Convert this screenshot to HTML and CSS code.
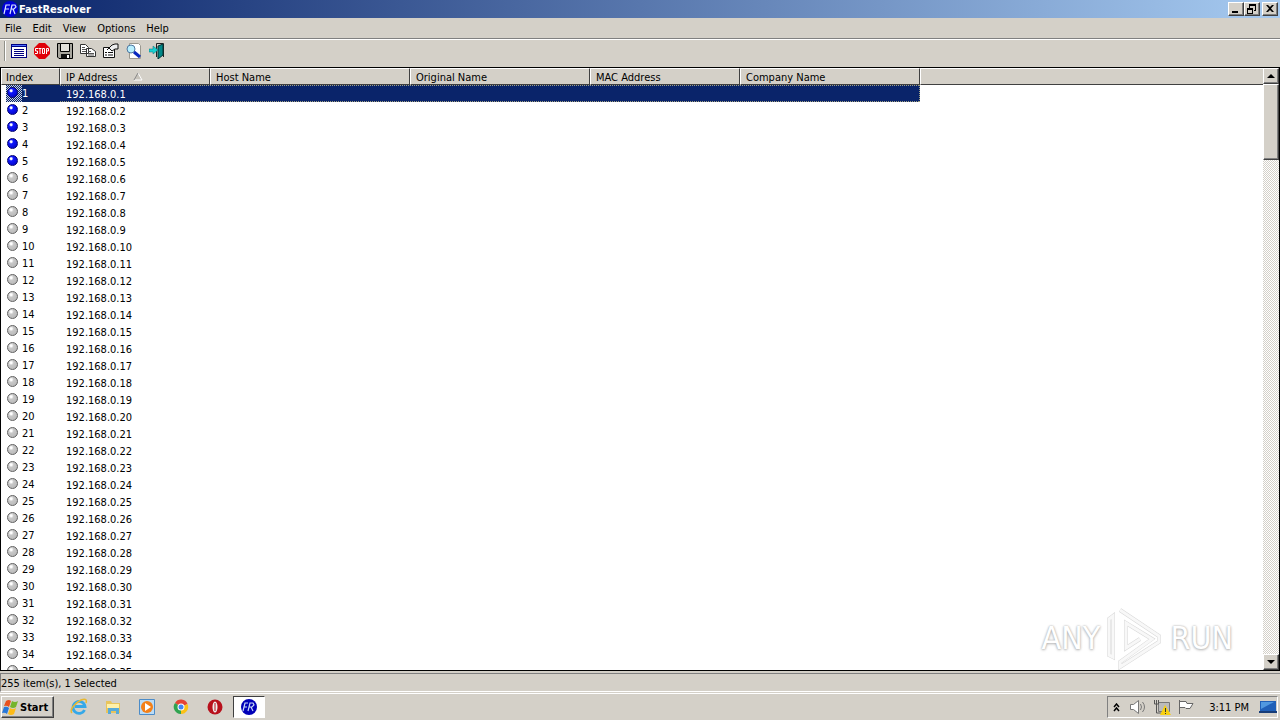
FILE: index.html
```html
<!DOCTYPE html>
<html lang="en">
<head>
<meta charset="utf-8">
<title>FastResolver</title>
<link rel="stylesheet" href="styles.css">
</head>
<body>
<main class="window">
  <header class="titlebar">
    <svg class="icon16" viewBox="0 0 16 16"><circle cx="8" cy="8" r="8" fill="#0000d8"/><path d="M2 13L4 4H8M3 8H7M8 13L10 4H13L14 6L12 8H9M11 8L13 13" fill="none" stroke="#dce6ff" stroke-width="1.2"/></svg>
    <h1 class="title">FastResolver</h1>
    <div class="window-buttons">
      <button class="raised caption" aria-label="Minimize"><svg viewBox="0 0 12 10"><path d="M2 7h6v2H2z"/></svg></button>
      <button class="raised caption" aria-label="Restore"><svg viewBox="0 0 12 10"><path d="M3 0h7v7H8V6h1V2H4v2H3zM1 4h6v6H1zM2 6v3h4V6z" fill-rule="evenodd"/></svg></button>
      <button class="raised caption close" aria-label="Close"><svg viewBox="0 0 12 10"><path d="M2 1h2l2 2 2-2h2L7 4.500 10 8H8L6 6 4 8H2l3-3.500z"/></svg></button>
    </div>
  </header>
  <nav class="menubar">
    <button>File</button><button>Edit</button><button>View</button><button>Options</button><button>Help</button>
  </nav>
  <div class="toolbar">
    <span class="grip"></span>
    <button aria-label="Resolve"><svg class="icon16" viewBox="0 0 16 16"><path d="M0 1h16v14H0z" fill="#000080"/><path d="M1 4h14v10H1z" fill="#fff"/><path d="M1 2h14v1H1z" fill="#5070ff"/><path d="M3 6.500h10M3 8.500h10M3 10.500h10M3 12.500h10" stroke="#000080"/></svg></button>
    <button aria-label="Stop"><svg class="icon16" viewBox="0 0 16 16"><path d="M5 0h6l5 5v6l-5 5H5l-5-5V5z" fill="#e00008"/><path d="M4 5.500H1.500v2.500H3.500v2.500H1M4.500 5.500h3M6 5.500V11M8.500 5.500h2v5h-2zM12.500 11V5.500h2V8h-2" fill="none" stroke="#fff"/></svg></button>
    <button aria-label="Save"><svg class="icon16" viewBox="0 0 16 16"><path d="M.5.500h15v15H2L.5 14z" fill="#a8a69e" stroke="#000"/><path d="M3.500.500h9v8h-9z" fill="#e4e2dc" stroke="#000"/><path d="M4 11h9v4H4z" fill="#111"/><path d="M10 12h2v3h-2z" fill="#fff"/></svg></button>
    <button aria-label="Copy"><svg class="icon16" viewBox="0 0 16 16"><path d="M.5 1.500h5l3 3v6h-8zM6.500 5.500h5l4 3v5h-9z" fill="#fff" stroke="#333"/><path d="M2 4.500h3M2 6.500h4M2 8.500h4M8 8.500h3M8 10.500h6M8 12h6" fill="none" stroke="#555"/></svg></button>
    <button aria-label="Properties"><svg class="icon16" viewBox="0 0 16 16"><path d="M.5 4.500h11v10H.5z" fill="#fff" stroke="#111"/><path d="M2 9.500h2M5 9.500h5M2 12h2M5 12h5" stroke="#111"/><path d="M4 7l5-5 3-1h3v5h-3L9 8 6 5" fill="#eee" stroke="#111"/></svg></button>
    <button aria-label="Find"><svg class="icon16" viewBox="0 0 16 16"><path d="M3.500.500h9l2 2v13h-11z" fill="#fff" stroke="#9a9890"/><circle cx="5" cy="6" r="4" fill="#b8efff" stroke="#5078a0"/><path d="M8 9l6 5" stroke="#0828c0" stroke-width="3"/></svg></button>
    <button aria-label="Exit"><svg class="icon16" viewBox="0 0 16 16"><path d="M7.500 14V.500h7V14" fill="#d4d0c8" stroke="#222"/><path d="M9 3l5-2v11l-5 4z" fill="#008888" stroke="#033"/><path d="M0 6h4V3l5 4-5 4V9H0z" fill="#18d0d0" stroke="#087078" stroke-width=".5"/></svg></button>
  </div>
  <section class="list">
    <div class="list-view">
      <table>
        <colgroup><col class="w59"><col class="w150"><col class="w200"><col class="w180"><col class="w150"><col class="w180"><col></colgroup>
        <thead><tr><th>Index</th><th>IP Address <svg class="sort" viewBox="0 0 10 8"><path d="M1 7L5 0l4 7z" fill="#c8c4bc"/><path d="M5 0l4 7H1" fill="none" stroke="#fff"/><path d="M1 7L5 0" stroke="#888"/></svg></th><th>Host Name</th><th>Original Name</th><th>MAC Address</th><th>Company Name</th><th></th></tr></thead>
        <tbody id="rows"></tbody>
      </table>
    </div>
    <div class="scrollbar">
      <button class="raised arrow" aria-label="Scroll up"><svg viewBox="0 0 8 4"><path d="M0 4l4-4 4 4z"/></svg></button>
      <div class="raised thumb"></div>
      <div class="track"></div>
      <button class="raised arrow" aria-label="Scroll down"><svg viewBox="0 0 8 4"><path d="M0 0h8L4 4z"/></svg></button>
    </div>
    <div class="watermark">
      <span>ANY</span>
      <svg viewBox="0 0 58 64"><path d="M7 51V10l-4 3v36zM14 4l39 26v6L14 61v-5l32-23L20 17v25l14-9" fill="none" stroke="#d8d8d8" stroke-width="4"/><path d="M7 51V10l-4 3v36zM14 4l39 26v6L14 61v-5l32-23L20 17v25l14-9" fill="none" stroke="#f8f8f8" stroke-width="3"/></svg>
      <span>RUN</span>
    </div>
  </section>
  <footer class="status"><span>255 item(s), 1 Selected</span></footer>
</main>
<nav class="taskbar">
  <button class="raised start"><svg class="icon18" viewBox="0 0 18 18"><path d="M4 3q3-2 5 0L7 9Q5 7 2 8z" fill="#e8501c"/><path d="M10 3q3 2 6 0l-2 6q-3 2-6 0z" fill="#75b52c"/><path d="M2 9q3-1 5 1l-2 6q-2-2-5-1z" fill="#2878d8"/><path d="M8 10q3 2 6 0l-2 6q-3 2-6 0z" fill="#fdbb18"/></svg>Start</button>
  <div class="quick">
    <button aria-label="Internet Explorer"><svg class="icon18" viewBox="0 0 18 18"><path d="M14.500 12A6 6 0 1 1 15 8.500H5" fill="none" stroke="#35a8e8" stroke-width="2.800"/><path d="M2 15C-1 12 5 5 11 2c5-2 6 0 5 3" fill="none" stroke="#e8b830" stroke-width="1.500"/></svg></button>
    <button aria-label="Explorer"><svg class="icon18" viewBox="0 0 18 18"><path d="M2 3h5l1 2h8v10H2z" fill="#e8c45c"/><path d="M3 6h12v4H3z" fill="#fff0a8"/><path d="M4 16v-6h11v6h-3v-3H7v3z" fill="#58aad8"/></svg></button>
    <button aria-label="Media Player"><svg class="icon18" viewBox="0 0 18 18"><path d="M1.500 1.500h15v15h-15z" fill="#bbdcf6" stroke="#4c8cc8"/><circle cx="9" cy="9" r="6" fill="#f48018"/><path d="M7 5l6 4-6 4z" fill="#fff"/></svg></button>
    <button aria-label="Chrome"><svg class="icon18" viewBox="0 0 18 18"><path d="M9 9L3 5a7 7 0 0 1 12.500 1z" fill="#e54335"/><path d="M9 9l6.500-3A7 7 0 0 1 9 16z" fill="#fbc116"/><path d="M9 9v7A7 7 0 0 1 3 5z" fill="#30a350"/><circle cx="9" cy="9" r="3.500" fill="#fff"/><circle cx="9" cy="9" r="2.500" fill="#4285f4"/></svg></button>
    <button aria-label="Opera"><svg class="icon18" viewBox="0 0 18 18"><circle cx="9" cy="9" r="7.500" fill="#b8101c"/><ellipse cx="9" cy="9" rx="2.500" ry="5.500" fill="#eee"/><path d="M9 5v8" stroke="#b8101c"/></svg></button>
  </div>
  <button class="task" aria-label="FastResolver"><svg class="icon18" viewBox="0 0 18 18"><circle cx="9" cy="9" r="8" fill="#0000b8"/><path d="M3 13L5 5H8M4 9H7M8 13L10 5H13L14 7L12 9H9M11 9L13 13" fill="none" stroke="#c8d8f8" stroke-width="1.200"/></svg></button>
  <div class="tray">
    <svg class="chevrons" viewBox="0 0 7 9"><path d="M1 4l2.500-3L6 4M1 8l2.500-3L6 8" fill="none" stroke="#000" stroke-width="1.500"/></svg>
    <svg class="icon18" viewBox="0 0 18 18"><path d="M1.500 6.500h3l5-4v13l-5-4h-3z" fill="#fff" stroke="#777"/><path d="M11.500 6q2 3 0 6M13.500 4q4 5 0 10" fill="none" stroke="#777"/></svg>
    <svg class="icon18 network" viewBox="0 0 18 18"><path d="M5.500 4.500h11v9h-11z" fill="#bbb" stroke="#777"/><path d="M1.500 2v4h4V2M3.500 2v4M3.500 6v9h5" fill="none" stroke="#555"/><path d="M12 7l6 10H7z" fill="#f8d010"/><path d="M12.500 10v4M12.500 15v1" stroke="#333"/></svg>
    <svg class="icon18 flag" viewBox="0 0 18 18"><path d="M2.500 2v14M3 3.500h6l1 2h6l-3 5H9l-1-1H3" fill="#fff" stroke="#666"/></svg>
    <time>3:11 PM</time>
    <svg class="icon18" viewBox="0 0 18 18"><path d="M1 3h16v10H1z" fill="#2060b8"/><path d="M2 4h13L2 11z" fill="#5098e0"/><path d="M0 13h18v2H0z" fill="#163c78"/></svg>
  </div>
</nav>
<script src="rows.js"></script>
</body>
</html>
```

FILE: styles.css
```css
* { box-sizing: border-box; }
body {
  margin: 0;
  height: 100vh;
  display: flex;
  flex-direction: column;
  overflow: hidden;
  background: #d4d0c8;
  color: #000;
  font: 11px/13px "DejaVu Sans Condensed", "DejaVu Sans", sans-serif;
}
button { border: 0; padding: 0; margin: 0; background: none; color: inherit; font: inherit; }
svg { display: block; flex: none; }
.icon16 { width: 16px; height: 16px; }
.icon18 { width: 18px; height: 18px; }
.raised {
  background: #d4d0c8;
  border: 1px solid;
  border-color: #fff #404040 #404040 #fff;
  box-shadow: inset -1px -1px #808080;
}
.window { flex: 1; min-height: 0; display: flex; flex-direction: column; }
.titlebar {
  height: 18px;
  flex: none;
  display: flex;
  align-items: center;
  padding: 0 2px;
  gap: 1px;
  background: linear-gradient(90deg, #0a246a, #a6caf0);
  color: #fff;
}
.title { margin: 0; flex: 1; font-size: 11px; font-weight: bold; }
.window-buttons { display: flex; }
.caption { width: 16px; height: 14px; display: flex; align-items: center; justify-content: center; }
.caption svg { width: 12px; height: 10px; }
.close { margin-left: 2px; }
.menubar {
  height: 21px;
  flex: none;
  display: flex;
  align-items: center;
  gap: 11px;
  padding: 0 5px;
  border-bottom: 1px solid #808080;
}
.toolbar {
  height: 28px;
  flex: none;
  display: flex;
  align-items: center;
  gap: 7px;
  padding: 0 4px 5px;
  border-top: 1px solid #fff;
}
.grip { width: 1px; height: 20px; background: #909088; box-shadow: 1px 0 #fff; margin-right: -1px; }
.list {
  flex: 1;
  min-height: 0;
  display: flex;
  position: relative;
  border: 1px solid #000;
  background: #fff;
}
.list-view { flex: 1; min-width: 0; overflow: hidden; }
table { width: 100%; table-layout: fixed; border-collapse: separate; border-spacing: 0; }
.w59 { width: 59px; }
.w150 { width: 150px; }
.w180 { width: 180px; }
.w200 { width: 200px; }
th {
  height: 17px;
  padding: 1px 5px 0;
  text-align: left;
  font-weight: normal;
  white-space: nowrap;
  background: #d4d0c8;
  border: 1px solid;
  border-color: #fff #404040 #404040 #fff;
  line-height: 13px;
}
th:first-child { padding-left: 4px; }
th:last-child { border-right: 0; }
.sort { display: inline-block; width: 10px; height: 8px; margin-left: 12px; }
td { height: 17px; padding: 1px 6px; line-height: 15px; white-space: nowrap; vertical-align: top; }
td:not(:first-child) { padding-top: 2px; padding-bottom: 0; }
.item { display: flex; align-items: center; gap: 4px; }
.ball {
  width: 11px;
  height: 11px;
  margin-bottom: 2px;
  border: 1px solid #606060;
  border-radius: 50%;
  background: radial-gradient(circle at 35% 30%, #fff 10%, #c8c8c8 30%, #b4b4b4);
}
.ball.blue { border-color: #000070; background: radial-gradient(circle at 35% 30%, #fff 10%, #1018ff 25%, #0000b8); }
.selected td { color: #fff; background: #0a246a; }
.selected td:not(:last-child) { background-image: repeating-linear-gradient(90deg, #a0a080 0 1px, transparent 1px 2px), repeating-linear-gradient(90deg, #a0a080 0 1px, transparent 1px 2px); background-size: 100% 1px; background-position: top, bottom; background-repeat: no-repeat; }
.selected td:first-child { background: linear-gradient(90deg, #fff 5px, transparent 5px 21px, #0a246a 21px), repeating-conic-gradient(#0a246a 0 25%, #c8d0e0 0 50%) 0 0 / 2px 2px; background-size: auto, 2px 2px; background-repeat: repeat; background-position: 0 0; }
.selected td:nth-child(6) { border-right: 1px dotted #a0a080; }
.selected td:last-child { background: none; }
.scrollbar { width: 16px; display: flex; flex-direction: column; flex: none; }
.arrow { height: 16px; flex: none; display: flex; align-items: center; justify-content: center; }
.arrow svg { width: 8px; height: 4px; }
.thumb { height: 76px; flex: none; }
.track { flex: 1; background: repeating-conic-gradient(#d4d0c8 0 25%, #fff 0 50%) 0 0 / 2px 2px; }
.watermark {
  position: absolute;
  right: 46px;
  bottom: 0;
  display: flex;
  align-items: center;
  gap: 6px;
  color: #fff;
  font: 32px/60px "DejaVu Sans Condensed", "DejaVu Sans", sans-serif;
  text-shadow: 0 0 2px #aaa, 0 1px 3px #bbb;
}
.watermark svg { width: 58px; height: 64px; }
.status { height: 22px; flex: none; padding-top: 2px; }
.status span {
  display: block;
  height: 19px;
  padding: 3px 0 0;
  border-top: 1px solid #808080;
  border-left: 1px solid #808080;
  border-bottom: 1px solid #fff;
}
.taskbar {
  height: 27px;
  flex: none;
  display: flex;
  align-items: center;
  padding: 0 2px 0 1px;
  border-top: 1px solid #fff;
}
.start {
  width: 53px;
  height: 22px;
  display: flex;
  align-items: center;
  font-weight: bold;
}
.quick { display: flex; gap: 16px; margin-left: 16px; }
.task {
  width: 32px;
  height: 22px;
  margin-left: 9px;
  display: flex;
  align-items: center;
  justify-content: center;
  background: #fff;
  border: 1px solid;
  border-color: #404040 #fff #fff #404040;
}
.tray {
  height: 22px;
  margin-left: auto;
  display: flex;
  align-items: center;
  padding: 0 0 0 5px;
  border: 1px solid;
  border-color: #808080 #fff #fff #808080;
}
.chevrons { width: 7px; height: 9px; margin-right: 9px; }
.network, .flag { margin-left: 6px; }
time { margin: 0 10px 0 14px; }
```

FILE: rows.js
```js
const rows = document.getElementById('rows');
for (let i = 1; i <= 35; i++) {
  const row = document.createElement('tr');
  if (i === 1) row.className = 'selected';
  const color = i <= 5 ? 'ball blue' : 'ball';
  row.innerHTML = `<td><div class="item"><span class="${color}"></span>${i}</div></td><td>192.168.0.${i}</td><td></td><td></td><td></td><td></td><td></td>`;
  rows.append(row);
}
```
